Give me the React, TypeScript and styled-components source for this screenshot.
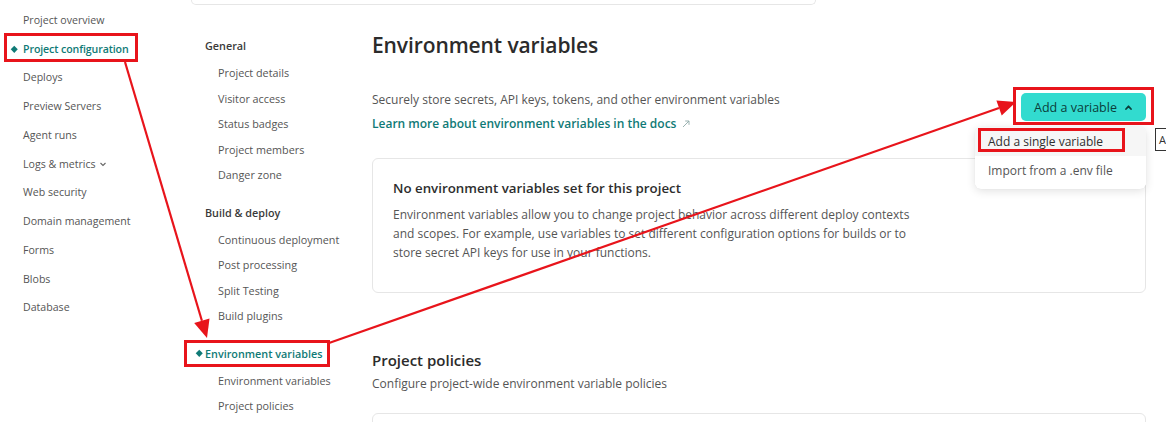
import React from "react";
import styled, { createGlobalStyle, css } from "styled-components";

const Global = createGlobalStyle`
  html, body { margin: 0; padding: 0; background: #fff; }
  body {
    font-family: "Open Sans", "Noto Sans", sans-serif;
    color: #555;
    -webkit-font-smoothing: antialiased;
  }
  * { box-sizing: border-box; }
`;

const TEAL = "#0f7a76";

const Page = styled.div`
  position: relative;
  width: 1166px;
  height: 422px;
  overflow: hidden;
  display: flex;
`;

/* ---------- primary sidebar ---------- */
const SideNav = styled.nav`
  width: 180px;
  flex: none;
  padding-top: 5.6px;
  display: flex;
  flex-direction: column;
`;

const activeDiamond = css`
  &::before {
    content: "";
    position: absolute;
    top: 50%;
    width: 4.5px;
    height: 4.5px;
    background: currentColor;
    transform: translateY(-50%) rotate(45deg);
  }
`;

const SideItem = styled.a<{ $active?: boolean }>`
  position: relative;
  height: 28.75px;
  display: flex;
  align-items: center;
  gap: 3px;
  padding-left: 23px;
  font-size: 10.6px;
  color: #555;
  text-decoration: none;
  white-space: nowrap;
  ${(p) =>
    p.$active &&
    css`
      color: ${TEAL};
      font-weight: 600;
      letter-spacing: -0.1px;
      ${activeDiamond}
      &::before { left: 12px; }
    `}
`;

/* ---------- right side ---------- */
const Workspace = styled.div`
  flex: 1;
  display: flex;
  flex-direction: column;
`;

const TopCardEdge = styled.div`
  flex: none;
  margin-left: 11px;
  width: 625px;
  height: 5px;
  border: 1px solid #e6e6e6;
  border-top: none;
  border-radius: 0 0 7px 7px;
`;

const Columns = styled.div`
  display: flex;
`;

const SubNav = styled.nav`
  width: 192px;
  flex: none;
  padding: 26px 0 0 25px;
  display: flex;
  flex-direction: column;
  gap: 10px;
`;

const Group = styled.div`
  display: flex;
  flex-direction: column;
`;

const GroupTitle = styled.div<{ $active?: boolean }>`
  position: relative;
  height: 29px;
  display: flex;
  align-items: center;
  font-size: 10.8px;
  font-weight: 600;
  color: #3a3a3a;
  white-space: nowrap;
  ${(p) =>
    p.$active &&
    css`
      color: ${TEAL};
      ${activeDiamond}
      &::before { left: -8px; }
    `}
`;

const SubItem = styled.a`
  height: 25.5px;
  display: flex;
  align-items: center;
  padding-left: 13px;
  font-size: 10.8px;
  color: #555;
  text-decoration: none;
  white-space: nowrap;
`;

const Main = styled.main`
  width: 774px;
  flex: none;
  padding-top: 26px;
  display: flex;
  flex-direction: column;
`;

const Title = styled.h1`
  margin: 0;
  font-size: 21px;
  font-weight: 600;
  line-height: 28px;
  color: #2b2b2b;
  letter-spacing: -0.1px;
`;

const IntroRow = styled.div`
  margin-top: 32px;
  display: flex;
  justify-content: space-between;
  align-items: flex-start;
`;

const Intro = styled.div`
  display: flex;
  flex-direction: column;
  gap: 6px;
`;

const Lead = styled.p`
  margin: 0;
  font-size: 12px;
  line-height: 18px;
  color: #555;
`;

const DocLink = styled.a`
  display: inline-flex;
  align-items: center;
  gap: 5px;
  font-size: 12px;
  line-height: 18px;
  font-weight: 600;
  color: ${TEAL};
  text-decoration: none;
`;

const ActionWrap = styled.div`
  position: relative;
  margin-top: 2px;
`;

const PrimaryButton = styled.button`
  height: 28px;
  width: 125px;
  display: flex;
  align-items: center;
  justify-content: center;
  gap: 7px;
  border: none;
  border-radius: 5px;
  background: #32dbcf;
  color: #0b3d3a;
  font-family: inherit;
  font-size: 12.5px;
  font-weight: 500;
  cursor: pointer;
`;

const Menu = styled.ul`
  position: absolute;
  top: 34px;
  right: 0;
  width: 171px;
  margin: 0;
  padding: 0 0 4px;
  list-style: none;
  background: #fff;
  border-radius: 6px;
  box-shadow: 0 2px 10px rgba(0, 0, 0, 0.12), 0 0 1px rgba(0, 0, 0, 0.08);
  overflow: hidden;
  z-index: 2;
`;

const MenuItem = styled.li<{ $highlight?: boolean }>`
  height: 29px;
  display: flex;
  align-items: center;
  padding-left: 13px;
  font-size: 12px;
  color: ${(p) => (p.$highlight ? "#2f2f2f" : "#555")};
  background: ${(p) => (p.$highlight ? "#f6f6f6" : "#fff")};
  white-space: nowrap;
`;

const Card = styled.section<{ $pad?: string }>`
  margin-top: ${(p) => p.$pad || "0"};
  border: 1px solid #e6e6e6;
  border-radius: 6px;
  padding: 20px 20px 30px;
`;

const CardTitle = styled.h3`
  margin: 0;
  font-size: 13.3px;
  line-height: 19px;
  font-weight: 600;
  color: #2d2d2d;
`;

const CardText = styled.p`
  margin: 7px 0 0;
  max-width: 535px;
  font-size: 12px;
  line-height: 19px;
  color: #555;
`;

const SectionTitle = styled.h2`
  margin: 56px 0 0;
  font-size: 15px;
  line-height: 22px;
  font-weight: 600;
  color: #2b2b2b;
`;

const SectionLead = styled.p`
  margin: 4px 0 0;
  font-size: 12px;
  line-height: 18px;
  color: #555;
`;

const EmptyCard = styled.div`
  margin-top: 20px;
  height: 60px;
  border: 1px solid #e6e6e6;
  border-radius: 6px;
`;

/* small tooltip peeking in from the right edge */
const Tip = styled.div`
  position: absolute;
  left: 1155px;
  top: 128px;
  width: 40px;
  height: 23px;
  padding-left: 3px;
  display: flex;
  align-items: center;
  border: 1px solid #333;
  background: #fff;
  font-size: 11px;
  color: #333;
`;

/* red annotation layer */
const Annotations = styled.svg`
  position: absolute;
  inset: 0;
  pointer-events: none;
  z-index: 5;
`;

const ChevronDown = () => (
  <svg width="8" height="8" viewBox="0 0 8 8" aria-hidden>
    <path d="M1.5 3 L4 5.5 L6.5 3" fill="none" stroke="#666" strokeWidth="1.1" />
  </svg>
);

const ChevronUp = () => (
  <svg width="9" height="9" viewBox="0 0 9 9" aria-hidden>
    <path d="M2 6 L4.5 3.3 L7 6" fill="none" stroke="#0b3d3a" strokeWidth="1.8" strokeLinecap="round" strokeLinejoin="round" />
  </svg>
);

const ExternalArrow = () => (
  <svg width="10" height="10" viewBox="0 0 10 10" aria-hidden>
    <path d="M2 8 L8 2 M4.2 2 H8 V5.8" fill="none" stroke="#8fa9a8" strokeWidth="0.9" />
  </svg>
);

const primaryNav = [
  "Project overview",
  "Project configuration",
  "Deploys",
  "Preview Servers",
  "Agent runs",
  "Logs & metrics",
  "Web security",
  "Domain management",
  "Forms",
  "Blobs",
  "Database",
];

const settingsNav: { title: string; active?: boolean; items: string[] }[] = [
  {
    title: "General",
    items: ["Project details", "Visitor access", "Status badges", "Project members", "Danger zone"],
  },
  {
    title: "Build & deploy",
    items: ["Continuous deployment", "Post processing", "Split Testing", "Build plugins"],
  },
  {
    title: "Environment variables",
    active: true,
    items: ["Environment variables", "Project policies"],
  },
];

export default function App() {
  return (
    <>
      <Global />
      <Page>
        <SideNav>
          {primaryNav.map((label) => (
            <SideItem key={label} $active={label === "Project configuration"}>
              {label}
              {label === "Logs & metrics" && <ChevronDown />}
            </SideItem>
          ))}
        </SideNav>

        <Workspace>
          <TopCardEdge />
          <Columns>
            <SubNav>
              {settingsNav.map((g) => (
                <Group key={g.title}>
                  <GroupTitle $active={g.active}>{g.title}</GroupTitle>
                  {g.items.map((it) => (
                    <SubItem key={it}>{it}</SubItem>
                  ))}
                </Group>
              ))}
            </SubNav>

            <Main>
              <Title>Environment variables</Title>
              <IntroRow>
                <Intro>
                  <Lead>Securely store secrets, API keys, tokens, and other environment variables</Lead>
                  <DocLink>
                    Learn more about environment variables in the docs
                    <ExternalArrow />
                  </DocLink>
                </Intro>
                <ActionWrap>
                  <PrimaryButton>
                    Add a variable
                    <ChevronUp />
                  </PrimaryButton>
                  <Menu>
                    <MenuItem $highlight>Add a single variable</MenuItem>
                    <MenuItem>Import from a .env file</MenuItem>
                  </Menu>
                </ActionWrap>
              </IntroRow>

              <Card $pad="25px">
                <CardTitle>No environment variables set for this project</CardTitle>
                <CardText>
                  Environment variables allow you to change project behavior across different deploy contexts
                  and scopes. For example, use variables to set different configuration options for builds or to
                  store secret API keys for use in your functions.
                </CardText>
              </Card>

              <SectionTitle>Project policies</SectionTitle>
              <SectionLead>Configure project-wide environment variable policies</SectionLead>
              <EmptyCard />
            </Main>
          </Columns>
        </Workspace>

        <Tip>A</Tip>

        <Annotations width="1166" height="422" viewBox="0 0 1166 422">
          <g fill="none" stroke="#e8141b" strokeWidth="3">
            <rect x="5.5" y="34.5" width="131" height="26" />
            <rect x="185.5" y="341.5" width="143" height="24" />
            <rect x="1014.5" y="88.5" width="138" height="35" />
            <rect x="979.5" y="129.5" width="144" height="21" />
          </g>
          <g stroke="#e8141b" strokeWidth="2.2" fill="#e8141b">
            <line x1="125" y1="62" x2="201.9" y2="320.8" />
            <polygon points="207,338 194.2,323 209.5,318.5" stroke="none" />
            <line x1="329" y1="343" x2="999" y2="108" />
            <polygon points="1016,102 1001.7,115.5 996.4,100.4" stroke="none" />
          </g>
        </Annotations>
      </Page>
    </>
  );
}
